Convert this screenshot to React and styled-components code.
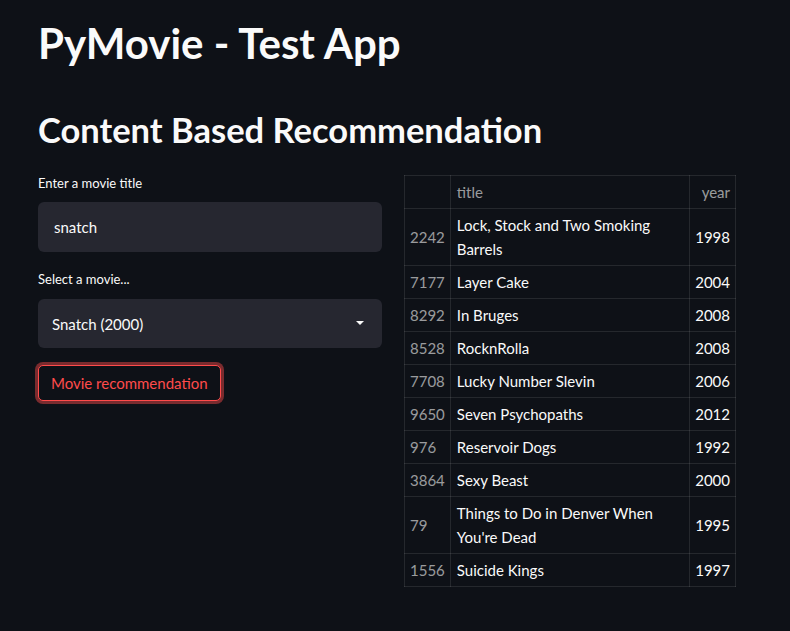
import React from 'react';
import styled, { createGlobalStyle } from 'styled-components';

const rows = [
	{ id: 2242, title: 'Lock, Stock and Two Smoking Barrels', year: 1998 },
	{ id: 7177, title: 'Layer Cake', year: 2004 },
	{ id: 8292, title: 'In Bruges', year: 2008 },
	{ id: 8528, title: 'RocknRolla', year: 2008 },
	{ id: 7708, title: 'Lucky Number Slevin', year: 2006 },
	{ id: 9650, title: 'Seven Psychopaths', year: 2012 },
	{ id: 976, title: 'Reservoir Dogs', year: 1992 },
	{ id: 3864, title: 'Sexy Beast', year: 2000 },
	{ id: 79, title: "Things to Do in Denver When You're Dead", year: 1995 },
	{ id: 1556, title: 'Suicide Kings', year: 1997 },
];

function App () {
	return (
		<>
			<Global />
			<Main>
				<Title>PyMovie - Test App</Title>
				<SubTitle>Content Based Recommendation</SubTitle>
				<Columns>
					<Column>
						<Label>Enter a movie title</Label>
						<Input defaultValue="snatch" />
						<Label>Select a movie...</Label>
						<Select>
							<span>Snatch (2000)</span>
							<Caret />
						</Select>
						<Button>Movie recommendation</Button>
					</Column>
					<Column>
						<Table>
							<thead>
								<tr>
									<Th narrow />
									<Th>title</Th>
									<Th right narrow>year</Th>
								</tr>
							</thead>
							<tbody>
								{rows.map(r => (
									<tr key={r.id}>
										<Index narrow>{r.id}</Index>
										<Td>{r.title}</Td>
										<Td right narrow>{r.year}</Td>
									</tr>
								))}
							</tbody>
						</Table>
					</Column>
				</Columns>
			</Main>
		</>
	)
}

const Global = createGlobalStyle`
	body {
		margin: 0;
		background: #0e1117;
		color: #fafafa;
		font-family: Lato, "Open Sans", sans-serif;
	}
`;

const Main = styled.div`
	padding: 0 42px 0 38px;
	height: 631px;
	box-sizing: border-box;
	overflow: hidden;
`;

const Title = styled.h1`
	font-size: 42px;
	font-weight: 700;
	line-height: 50px;
	margin: 0;
	padding: 18px 0 0 0;
`;

const SubTitle = styled.h2`
	font-size: 34.5px;
	font-weight: 700;
	line-height: 42px;
	margin: 0;
	padding: 41px 0 22px 0;
`;

const Columns = styled.div`
	display: grid;
	grid-template-columns: 344px 344px;
	gap: 22px;
`;

const Column = styled.div`
	display: flex;
	flex-direction: column;
	align-items: flex-start;
`;

const Label = styled.label`
	font-size: 13px;
	line-height: 20px;
	margin: 0 0 9px 0;
	color: #fafafa;
`;

const Input = styled.input`
	width: 100%;
	height: 50px;
	box-sizing: border-box;
	background: #262730;
	border: none;
	border-radius: 6px;
	padding: 0 16px;
	font: inherit;
	font-size: 15px;
	color: #fafafa;
	outline: none;
	margin-bottom: 17px;
`;

const Select = styled.div`
	width: 100%;
	height: 49px;
	box-sizing: border-box;
	background: #262730;
	border-radius: 6px;
	padding: 0 18px 0 14px;
	display: flex;
	align-items: center;
	justify-content: space-between;
	font-size: 15px;
	margin-top: 1px;
	margin-bottom: 17px;
`;

const Caret = styled.span`
	width: 0;
	height: 0;
	border-left: 4px solid transparent;
	border-right: 4px solid transparent;
	border-top: 4px solid #fafafa;
	margin-top: -2px;
`;

const Button = styled.button`
	font: inherit;
	font-size: 15px;
	color: #ff4b4b;
	background: #0e1117;
	border: 1px solid #ff4b4b;
	border-radius: 5px;
	padding: 0 12px;
	height: 36px;
	box-shadow: 0 0 0 3px rgba(255, 75, 75, 0.45);
`;

const Table = styled.table`
	border-collapse: collapse;
	width: 332px;
	font-size: 15px;
	line-height: 24px;
	margin-top: 2px;
	border: 1px solid rgba(250, 250, 250, 0.1);
`;

const Th = styled.th`
	font-weight: 400;
	color: rgba(250, 250, 250, 0.6);
	text-align: ${p => (p.right ? 'right' : 'left')};
	padding: ${p => (p.narrow ? '4px 5px' : '4px 6px')};
	border: 1px solid rgba(250, 250, 250, 0.1);
	&:first-child { width: 34px; }
`;

const Td = styled.td`
	padding: ${p => (p.narrow ? '4px 5px' : '4px 6px')};
	border: 1px solid rgba(250, 250, 250, 0.1);
	text-align: ${p => (p.right ? 'right' : 'left')};
	vertical-align: middle;
`;

const Index = styled(Td)`
	color: rgba(250, 250, 250, 0.6);
`;

export default App;
